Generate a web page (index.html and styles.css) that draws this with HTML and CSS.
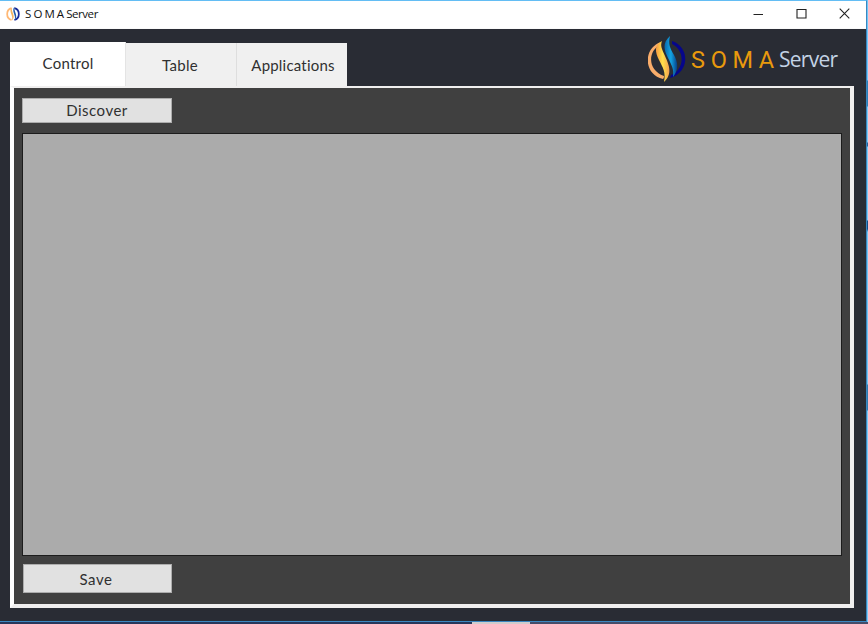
FILE: index.html
```html
<!DOCTYPE html>
<html lang="en">
<head>
<meta charset="utf-8">
<title>S O M A Server</title>
<link rel="stylesheet" href="styles.css">
</head>
<body>
<div class="screen">
  <div class="window">
    <header class="titlebar">
      <svg class="app-icon" width="16" height="16" viewBox="0 0 38 46">
        <path d="M15 6C-2 10-2 36 15 40" fill="none" stroke="#ffb875" stroke-width="5"/>
        <path d="M23 6C40 10 40 36 23 40" fill="none" stroke="#172a98" stroke-width="5"/>
        <path d="M15 5C5 16 21 26 16 42C28 29 15 20 15 5Z" fill="#f6b35d"/>
        <path d="M23 2C13 15 29 27 24 41C35 28 22 19 23 2Z" fill="#245ca9"/>
      </svg>
      <span class="title">S O M A Server</span>
      <div class="controls">
        <svg width="11" height="11"><path d="M0.5 6.5H10" stroke="#222" fill="none"/></svg>
        <svg width="11" height="11"><path d="M1 1.500H10V10H1Z" stroke="#222" stroke-width="1.1" fill="none"/></svg>
        <svg width="11" height="11"><path d="M.7 .7L10.300 10.300M10.300 .7L.7 10.300" stroke="#222" stroke-width="1.1" fill="none"/></svg>
      </div>
    </header>
    <main class="content">
      <div class="top">
        <nav class="tabs">
          <div class="tab active"><span class="t-control">Control</span></div>
          <div class="tab"><span class="t-table">Table</span></div>
          <div class="tab"><span class="t-apps">Applications</span></div>
        </nav>
        <div class="brand">
          <svg width="38" height="48" viewBox="0 0 38 48">
            <defs>
              <linearGradient id="flame" x1="0" x2="1"><stop offset="0" stop-color="#f59a42"/><stop offset=".5" stop-color="#ffe04a"/><stop offset="1" stop-color="#f3a050"/></linearGradient>
              <linearGradient id="wave" x1="0" x2="1"><stop offset="0" stop-color="#0768ad"/><stop offset=".5" stop-color="#14a4e2"/><stop offset="1" stop-color="#063f86"/></linearGradient>
            </defs>
            <path d="M13 6C-5 12-5 38 15 43C16 42 16 41 16 40C-1 34 0 15 12 9Z" fill="#f9ad6b"/>
            <path d="M24 5C42 11 42 36 22 42L23 39C37 33 37 14 24 8Z" fill="#06068b"/>
            <path d="M14 5C6 9 7 16 11 24C15 32 18 36 16 46C25 38 21 29 17 20C14 13 12 10 14 5Z" fill="url(#flame)"/>
            <path d="M22 0C14 7 16 14 20 22C24 30 26 33 25 41C31 34 30 26 26 19C22 12 20 8 22 0Z" fill="url(#wave)"/>
          </svg>
          <span class="soma">S O M A</span><span class="server">Server</span>
        </div>
      </div>
      <section class="panel">
        <button class="btn discover"><span>Discover</span></button>
        <div class="grid"></div>
        <button class="btn save"><span>Save</span></button>
      </section>
    </main>
  </div>
  <div class="edge-right"></div>
  <div class="edge-bottom"></div>
</div>
</body>
</html>
```
FILE: styles.css
```css
* { box-sizing: border-box; }
body { margin: 0; overflow: hidden; font-family: Lato, "Liberation Sans", sans-serif; color: #303030; }
.screen { display: grid; grid-template-columns: 867px 1px; grid-template-rows: 622px 2px; width: 868px; height: 624px; }
.window { display: flex; flex-direction: column; border: solid #3a87c1; border-width: 1px 1px 1px 0; border-top-color: #63bdf4; background: #292c34; }
.edge-right { background: linear-gradient(#72c7f8 80px, #2a7fb8 81px 106px, #7dcaf5 107px 142px, #205f9c 143px 146px, #7dcaf5 147px 220px, #104c8a 221px 229px, #75c5f2 232px 384px, #2f7aae 385px 410px, #7dcaf5 411px); }
.edge-bottom { grid-column: 1 / 3; background: linear-gradient(90deg, #27365a 472px, #d0cdcd 472px 530px, #454c69 530px); }
.titlebar { display: flex; align-items: center; height: 28px; padding: 0 18px 2px 5px; background: #fff; border-bottom: 1px solid #fafafa; }
.title { margin-left: 4px; font: 11.5px "Open Sans", sans-serif; letter-spacing: -0.45px; color: #111; white-space: nowrap; }
.controls { display: flex; gap: 32px; margin-left: auto; margin-right: -2px; }
.controls svg { display: block; }
.content { flex: 1; display: flex; flex-direction: column; padding: 0 12px 13px 10px; }
.top { display: flex; justify-content: space-between; height: 57px; }
.tabs { display: flex; align-items: flex-end; padding-top: 13px; }
.tab { display: flex; align-items: center; justify-content: center; width: 111px; height: 43px; padding-top: 1px; background: #f0f0f0; border-right: 1px solid #dedede; font-size: 15px; line-height: 20px; }
.tab:last-child { width: 110px; border-right: 0; }
.tab.active { width: 116px; height: 44px; padding: 0 0 2px 1px; background: #fff; border-color: #e4e4e4; }
.t-control { letter-spacing: 0.25px; }
.t-table { margin-right: 2px; letter-spacing: 0.35px; }
.t-apps { margin-left: 2px; letter-spacing: 0.2px; }
.brand { display: flex; align-items: center; width: 208px; height: 48px; margin: 7px -2px 0 0; white-space: nowrap; }
.brand svg { display: block; flex: none; }
.soma { width: 87px; margin: -1px 0 0 5px; font: 400 23.5px/32px Roboto, sans-serif; letter-spacing: -0.05px; color: #e99a0d; }
.server { margin: -3px 0 0 1px; font: 400 21px/32px "Open Sans", sans-serif; letter-spacing: -0.75px; color: #c3d3e5; }
.panel { flex: 1; display: flex; flex-direction: column; align-items: flex-start; width: 844px; padding: 10px 8px 11px; border: solid #f0efef; border-width: 2px 4px 4px; border-left-color: #fff; background: #404040; }
.btn { width: 150px; border: 1px solid #adadad; background: #e1e1e1; padding: 0; font: 15px/20px Lato, sans-serif; color: #303030; }
.btn span { display: block; }
.discover { height: 25px; letter-spacing: 0.5px; }
.discover span { margin-top: -2px; }
.save { width: 149px; height: 29px; margin-left: 1px; letter-spacing: 0.6px; }
.save span { margin-right: 3px; }
.grid { flex: 1; width: 820px; margin: 10px 0 8px; border: 1px solid #1c1c1c; background: #ababab; }
```
